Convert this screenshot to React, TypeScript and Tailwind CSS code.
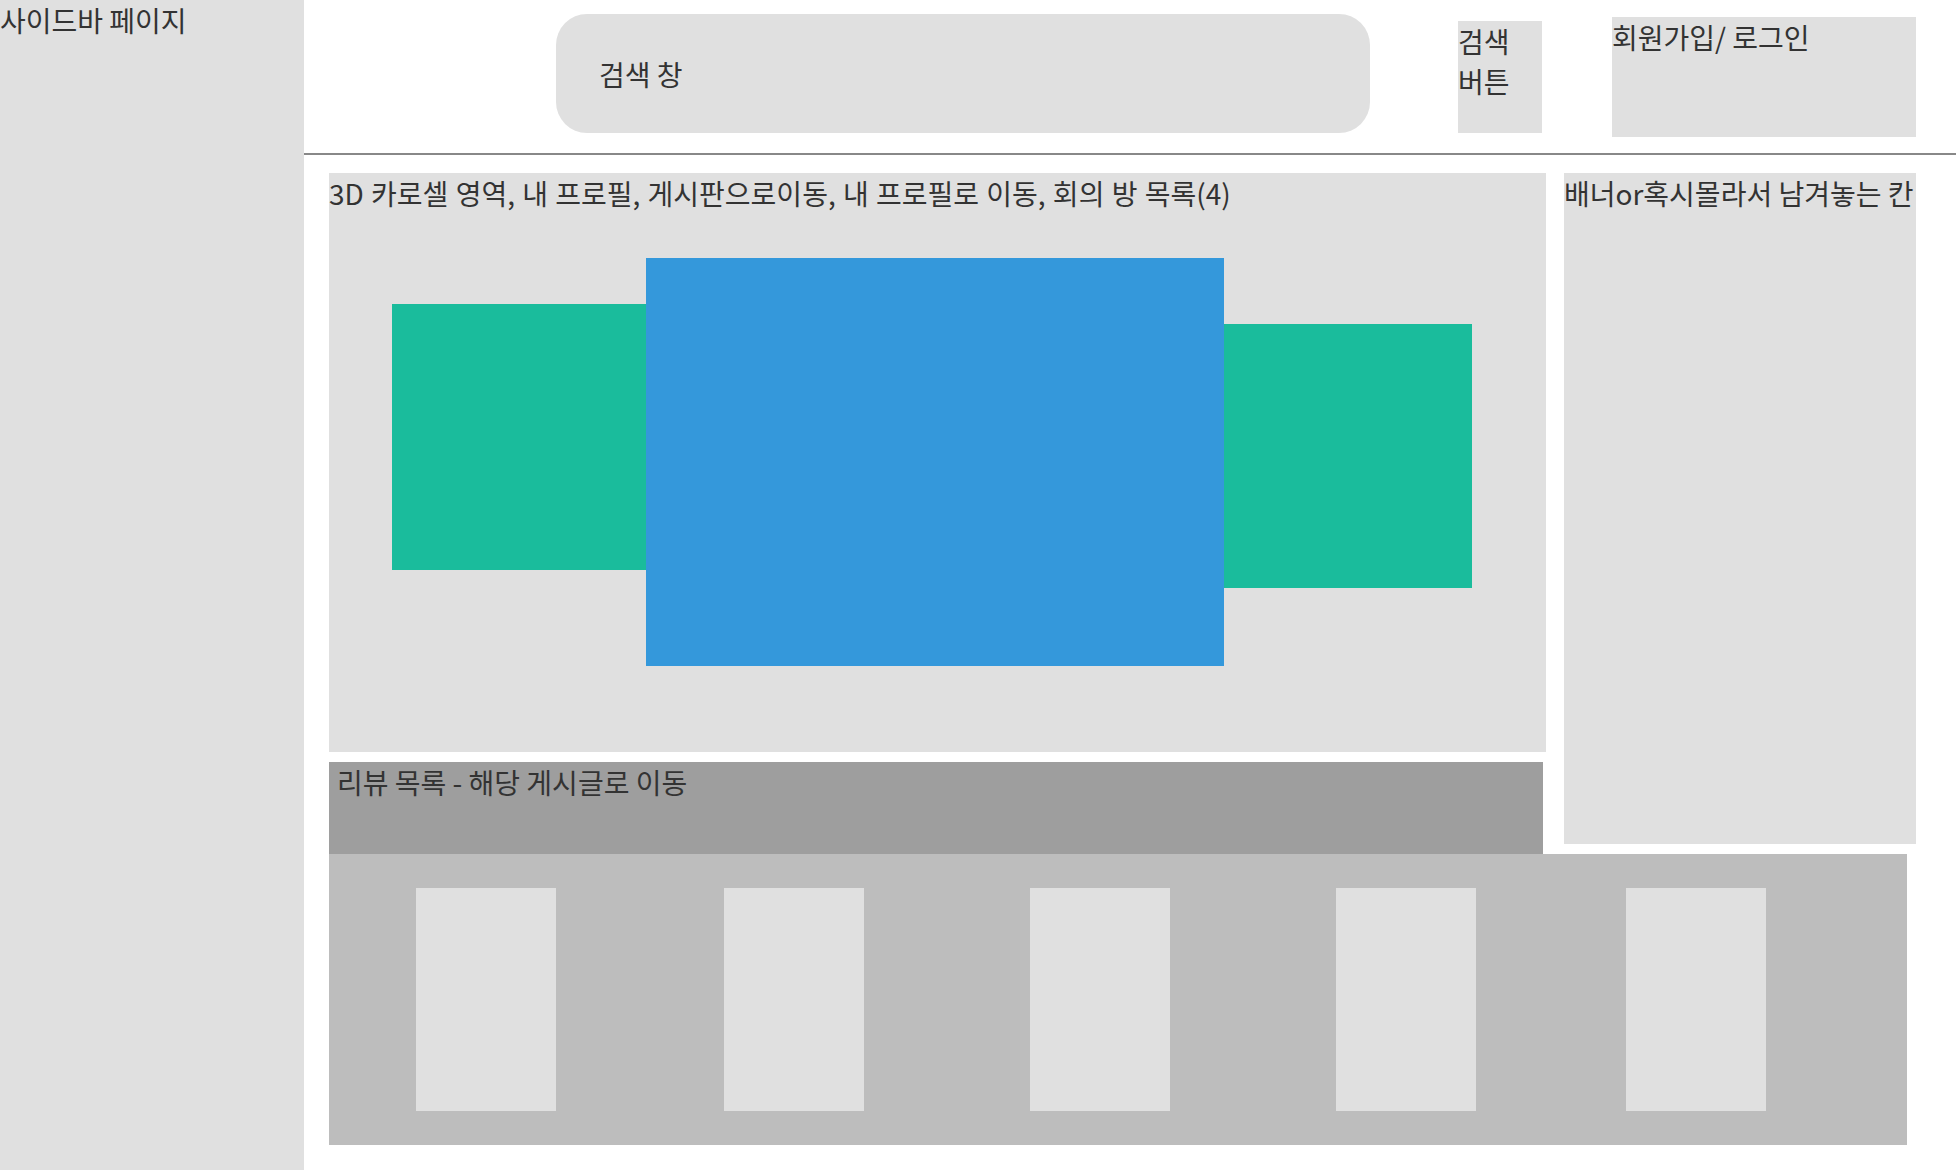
const cards = [
  { id: 1, cls: 'ml-[87px]' },
  { id: 2, cls: 'ml-[168px]' },
  { id: 3, cls: 'ml-[166px]' },
  { id: 4, cls: 'ml-[166px]' },
  { id: 5, cls: 'ml-[150px]' },
];

export default function App() {
  return (
    <div className="flex w-[1956px] h-[1172px] bg-white text-[#333333] text-[28px] leading-[40px] font-['Noto_Sans_CJK_KR','Noto_Sans',sans-serif]">
      {/* sidebar */}
      <aside className="w-[304px] h-[1170px] shrink-0 bg-[#e0e0e0]">사이드바 페이지</aside>

      <div className="flex-1 flex flex-col">
        {/* header */}
        <header className="h-[155px] border-b-2 border-[#888888] flex items-start">
          <div className="ml-[252px] mt-[14px] w-[814px] h-[119px] rounded-[31px] bg-[#e0e0e0] flex items-center pl-[43px]">
            검색 창
          </div>
          <div className="ml-[88px] mt-[21px] w-[84px] h-[112px] bg-[#e0e0e0]">
            검색
            <br />
            버튼
          </div>
          <div className="ml-[70px] mt-[17px] w-[304px] h-[120px] bg-[#e0e0e0]">회원가입/ 로그인</div>
        </header>

        {/* body */}
        <div className="pl-[25px] pt-[18px] flex flex-col">
          <div className="flex items-start">
            <div className="w-[1217px] flex flex-col">
              <section className="h-[579px] bg-[#e0e0e0] flex flex-col">
                <div className="whitespace-nowrap [word-spacing:1px]">3D 카로셀 영역, 내 프로필, 게시판으로이동, 내 프로필로 이동, 회의 방 목록(4)</div>
                <div className="flex items-start pl-[63px]">
                  <div className="mt-[91px] w-[254px] h-[266px] bg-[#1abc9c]" />
                  <div className="mt-[45px] w-[578px] h-[408px] bg-[#3498db]" />
                  <div className="mt-[111px] w-[248px] h-[264px] bg-[#1abc9c]" />
                </div>
              </section>
              <section className="mt-[10px] w-[1214px] h-[92px] bg-[#9e9e9e] pl-[8px]">리뷰 목록 - 해당 게시글로 이동</section>
            </div>
            <aside className="ml-[18px] w-[352px] h-[671px] bg-[#e0e0e0] whitespace-nowrap">배너or혹시몰라서 남겨놓는 칸</aside>
          </div>

          {/* review list */}
          <div className="w-[1578px] h-[291px] bg-[#bdbdbd] flex items-start pt-[34px]">
            {cards.map((c) => (
              <div key={c.id} className={`${c.cls} w-[140px] h-[223px] bg-[#e0e0e0]`} />
            ))}
          </div>
        </div>
      </div>
    </div>
  );
}
